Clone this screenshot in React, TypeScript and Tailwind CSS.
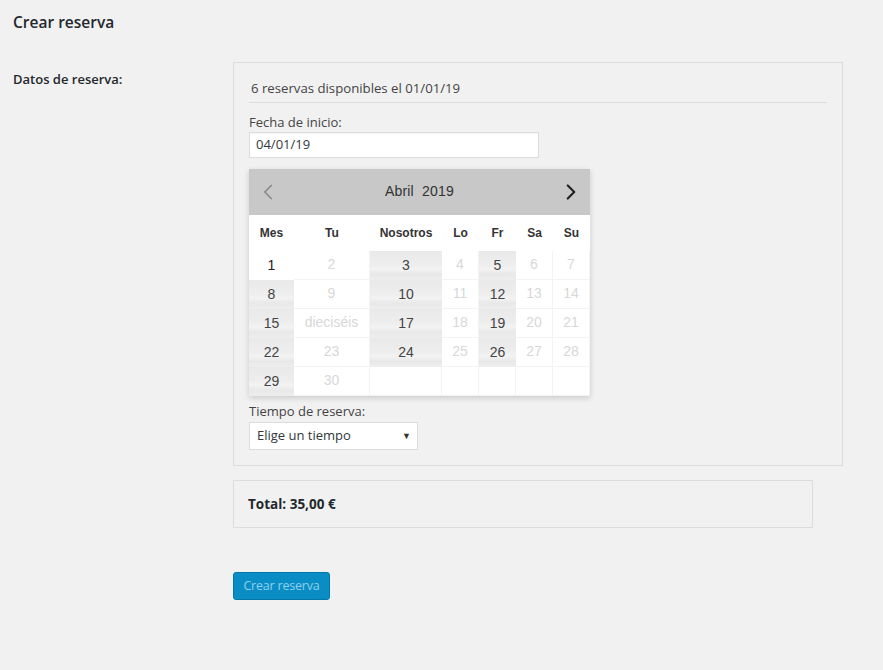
import { ChevronLeft, ChevronRight } from "lucide-react";

type Day = { label: string; kind: "open" | "today" | "off" | "empty" };

const rows: Day[][] = [
  [
    { label: "1", kind: "today" },
    { label: "2", kind: "off" },
    { label: "3", kind: "open" },
    { label: "4", kind: "off" },
    { label: "5", kind: "open" },
    { label: "6", kind: "off" },
    { label: "7", kind: "off" },
  ],
  [
    { label: "8", kind: "open" },
    { label: "9", kind: "off" },
    { label: "10", kind: "open" },
    { label: "11", kind: "off" },
    { label: "12", kind: "open" },
    { label: "13", kind: "off" },
    { label: "14", kind: "off" },
  ],
  [
    { label: "15", kind: "open" },
    { label: "dieciséis", kind: "off" },
    { label: "17", kind: "open" },
    { label: "18", kind: "off" },
    { label: "19", kind: "open" },
    { label: "20", kind: "off" },
    { label: "21", kind: "off" },
  ],
  [
    { label: "22", kind: "open" },
    { label: "23", kind: "off" },
    { label: "24", kind: "open" },
    { label: "25", kind: "off" },
    { label: "26", kind: "open" },
    { label: "27", kind: "off" },
    { label: "28", kind: "off" },
  ],
  [
    { label: "29", kind: "open" },
    { label: "30", kind: "off" },
    { label: "", kind: "empty" },
    { label: "", kind: "empty" },
    { label: "", kind: "empty" },
    { label: "", kind: "empty" },
    { label: "", kind: "empty" },
  ],
];

const weekDays = ["Mes", "Tu", "Nosotros", "Lo", "Fr", "Sa", "Su"];

const cellClass = {
  open: "text-[#444] bg-[linear-gradient(to_bottom,#e9e9e9_0%,#eeeeee_50%,#f3f3f3_62%,#e8e8e8_80%,#eeeeee_100%)]",
  today: "text-[#222] bg-white",
  off: "text-[#d8d8d8] bg-white border-r border-b border-[#f3f3f3]",
  empty: "bg-white border-r border-b border-[#f3f3f3]",
};

const Calendar = () => (
  <div className="w-[341px] shadow-[0_2px_6px_rgba(0,0,0,0.16)] font-['Liberation_Sans',Arial,sans-serif]">
    <div className="h-[46px] bg-[#c8c8c8] flex items-center justify-between px-[6px]">
      <ChevronLeft className="w-[26px] h-[26px] text-[#8a8a8a]" strokeWidth={1.6} />
      <span className="text-[14px] text-[#333] tracking-[0.2px]">Abril&nbsp; 2019</span>
      <ChevronRight className="w-[26px] h-[26px] text-[#222]" strokeWidth={2} />
    </div>
    <div className="grid grid-cols-[45px_76px_72px_37px_37px_37px_37px] bg-white">
      {weekDays.map((d) => (
        <div key={d} className="h-[36px] flex items-center justify-center text-[12px] font-bold text-[#333]">
          {d}
        </div>
      ))}
      {rows.flat().map((d, i) => (
        <div
          key={i}
          className={`h-[29px] flex items-center justify-center text-[14px] ${cellClass[d.kind]}`}
        >
          {d.label}
        </div>
      ))}
    </div>
  </div>
);

export default function App() {
  return (
    <div className="min-h-[670px] bg-[#f1f1f1] text-[#23282d] font-['Open_Sans','Noto_Sans',sans-serif] pl-[13px] pt-[11px]">
      <h1 className="text-[15.5px] font-semibold leading-[22px]">Crear reserva</h1>

      <div className="flex mt-[29px]">
        <div className="w-[220px] pt-[8px] text-[13px] font-semibold">Datos de reserva:</div>

        <div>
          <div className="w-[610px] border border-[#dcdcdc] px-[15px] pt-[16px] pb-[15px]">
            <div className="text-[13.2px] text-[#444] pb-[3px] border-b border-[#dcdcdc] pl-[2px]">
              6 reservas disponibles el 01/01/19
            </div>

            <div className="mt-[10px] text-[13px] text-[#444] leading-[18px]">Fecha de inicio:</div>
            <div className="mt-[1px] w-[290px] h-[26px] bg-white border border-[#ddd] shadow-[inset_0_1px_2px_rgba(0,0,0,0.05)] flex items-center px-[6px] text-[13px] text-[#32373c]">
              04/01/19
            </div>

            <div className="mt-[11px]">
              <Calendar />
            </div>

            <div className="mt-[6px] text-[13px] text-[#444] leading-[18px]">Tiempo de reserva:</div>
            <div className="mt-[2px] w-[169px] h-[28px] bg-white border border-[#ddd] flex items-center justify-between pl-[7px] pr-[6px] text-[13px] text-[#32373c]">
              <span>Elige un tiempo</span>
              <span className="text-[9px] text-[#333]">▼</span>
            </div>
          </div>

          <div className="mt-[14px] w-[580px] h-[48px] border border-[#dcdcdc] flex items-center px-[14px] text-[13.5px] font-bold text-[#23282d]">
            Total: 35,00 €
          </div>

          <button className="mt-[44px] w-[97px] h-[28px] rounded-[3px] bg-[#0a8dc4] border border-[#0077a8] text-[12.5px] tracking-[-0.2px] text-[#8fd0ec] leading-[26px] text-center">
            Crear reserva
          </button>
        </div>
      </div>
    </div>
  );
}
